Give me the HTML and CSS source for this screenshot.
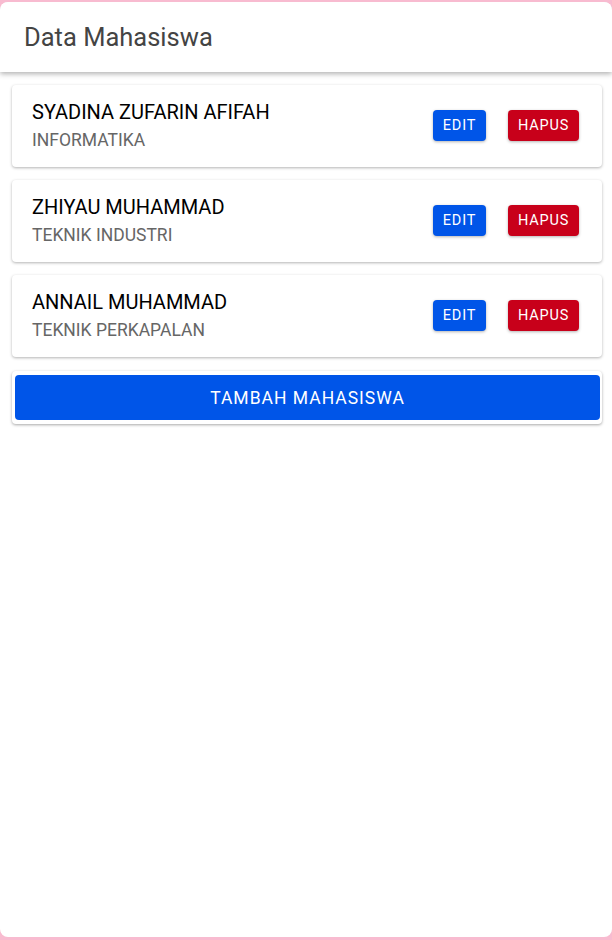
FILE: index.html
```html
<!DOCTYPE html>
<html>
<head>
<meta charset="utf-8">
<link rel="stylesheet" href="styles.css">
</head>
<body>
<div class="screen">
  <header class="topbar">Data Mahasiswa</header>
  <main class="list">
    <div class="card">
      <div class="info">
        <div class="name">SYADINA ZUFARIN AFIFAH</div>
        <div class="major">INFORMATIKA</div>
      </div>
      <div class="actions">
        <button class="btn edit">EDIT</button>
        <button class="btn hapus">HAPUS</button>
      </div>
    </div>
    <div class="card">
      <div class="info">
        <div class="name">ZHIYAU MUHAMMAD</div>
        <div class="major">TEKNIK INDUSTRI</div>
      </div>
      <div class="actions">
        <button class="btn edit">EDIT</button>
        <button class="btn hapus">HAPUS</button>
      </div>
    </div>
    <div class="card">
      <div class="info">
        <div class="name">ANNAIL MUHAMMAD</div>
        <div class="major">TEKNIK PERKAPALAN</div>
      </div>
      <div class="actions">
        <button class="btn edit">EDIT</button>
        <button class="btn hapus">HAPUS</button>
      </div>
    </div>
    <div class="add-wrap">
      <button class="add">TAMBAH MAHASISWA</button>
    </div>
  </main>
</div>
</body>
</html>
```
FILE: styles.css
```css
html, body {
  margin: 0;
  padding: 0;
}
body {
  background: #f8bbd0;
  font-family: Roboto, "Liberation Sans", sans-serif;
  height: 940px;
  overflow: hidden;
}
.screen {
  margin-top: 2px;
  height: 935px;
  background: #ffffff;
  border-radius: 8px;
  overflow: hidden;
}
.topbar {
  height: 70px;
  box-sizing: border-box;
  padding-left: 24px;
  display: flex;
  align-items: center;
  font-size: 25.5px;
  color: #444444;
  background: #fff;
  box-shadow: 0 2px 5px rgba(0,0,0,0.3);
  position: relative;
  z-index: 1;
}
.list {
  padding: 13px 10px 0 12px;
  display: flex;
  flex-direction: column;
  gap: 13px;
}
.card {
  height: 82px;
  box-sizing: border-box;
  background: #fff;
  border-radius: 4px;
  box-shadow: 0 1px 3px rgba(0,0,0,0.3);
  display: flex;
  align-items: center;
  justify-content: space-between;
  padding: 0 23px 0 20px;
}
.info {
  display: flex;
  flex-direction: column;
  gap: 6px;
  margin-top: 0;
}
.name {
  font-size: 20px;
  color: #000;
  line-height: 22px;
}
.major {
  font-size: 17.5px;
  color: #666666;
  line-height: 22px;
}
.actions {
  display: flex;
  gap: 22px;
  margin-top: -2px;
}
.btn {
  border: none;
  height: 31px;
  border-radius: 4px;
  color: #fff;
  font-family: Roboto, "Liberation Sans", sans-serif;
  font-size: 14.5px;
  font-weight: 400;
  letter-spacing: 0.8px;
  padding: 0;
  box-shadow: 0 1px 3px rgba(0,0,0,0.3);
}
.edit {
  background: #0055e8;
  width: 53px;
}
.hapus {
  background: #c8001a;
  width: 71px;
}
.add-wrap {
  margin-top: 1px;
  background: #fff;
  border-radius: 4px;
  box-shadow: 0 1px 3px rgba(0,0,0,0.35);
  padding: 4px 2px 4px 3px;
}
.add {
  display: block;
  width: 100%;
  height: 45px;
  border: none;
  border-radius: 4px;
  background: #0055e8;
  color: #fff;
  font-family: Roboto, "Liberation Sans", sans-serif;
  font-size: 17.5px;
  font-weight: 400;
  letter-spacing: 1px;
}
```
